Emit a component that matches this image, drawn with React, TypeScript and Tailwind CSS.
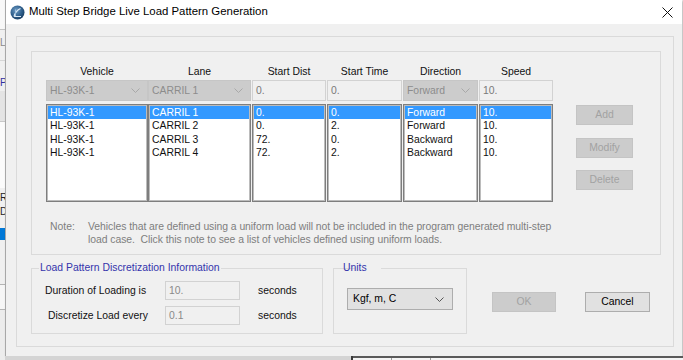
import React from 'react';

// column layout of the vehicle table (widths in px, measured from the dialog)
const columns = [
  { head: 'Vehicle', width: 'w-[102px]', kind: 'combo', value: 'HL-93K-1' },
  { head: 'Lane', width: 'w-[103px]', kind: 'combo', value: 'CARRIL 1' },
  { head: 'Start Dist', width: 'w-[75px]', kind: 'input', value: '0.' },
  { head: 'Start Time', width: 'w-[76px]', kind: 'input', value: '0.' },
  { head: 'Direction', width: 'w-[76px]', kind: 'combo', value: 'Forward' },
  { head: 'Speed', width: 'w-[75px]', kind: 'input', value: '10.' },
];

const rows = [
  ['HL-93K-1', 'CARRIL 1', '0.', '0.', 'Forward', '10.'],
  ['HL-93K-1', 'CARRIL 2', '0.', '2.', 'Forward', '10.'],
  ['HL-93K-1', 'CARRIL 3', '72.', '0.', 'Backward', '10.'],
  ['HL-93K-1', 'CARRIL 4', '72.', '2.', 'Backward', '10.'],
];

function Chevron({ color }: { color: string }) {
  return (
    <svg width="9" height="5" viewBox="0 0 9 5" className="shrink-0">
      <path d="M0.5 0.5 L4.5 4.5 L8.5 0.5" fill="none" stroke={color} strokeWidth="1" />
    </svg>
  );
}

function AppIcon() {
  return (
    <svg width="15" height="15" viewBox="0 0 15 15" className="shrink-0">
      <defs>
        <radialGradient id="g" cx="0.4" cy="0.35" r="0.7">
          <stop offset="0" stopColor="#6f9cc4" />
          <stop offset="0.6" stopColor="#2f5f8c" />
          <stop offset="1" stopColor="#173b5e" />
        </radialGradient>
      </defs>
      <circle cx="7.5" cy="7.5" r="7" fill="url(#g)" />
      <path d="M4 11.5 C5 8 7 5 10.5 3.5 M4 11.5 L11 11.5" stroke="#dbe8f3" strokeWidth="1.2" fill="none" />
      <path d="M5.5 4.5 L5.5 11" stroke="#9fc0dc" strokeWidth="1" fill="none" />
    </svg>
  );
}

function DisabledButton({ label }: { label: string }) {
  return (
    <div className="w-[57px] h-[20px] bg-[#cccccc] border border-[#c4c4c4] flex items-center justify-center text-[#a2a2a2]">
      {label}
    </div>
  );
}

export default function App() {
  return (
    <div className="w-[683px] h-[360px] overflow-hidden bg-[#f0f0f0] flex font-['Liberation_Sans',Arial,sans-serif] text-[10.4px] text-[#111]">
      {/* bit of the application window behind the dialog */}
      <div className="w-[5px] shrink-0 flex flex-col overflow-hidden text-[10px] leading-none">
        <div className="h-[29px] bg-[#f8f8f8]" />
        <div className="h-px bg-[#c4c4c4]" />
        <div className="h-[30px] bg-[#f0f0f0] text-[#8a8a8a] pt-[8px]">Lo</div>
        <div className="h-px bg-[#d6d6d6]" />
        <div className="h-[30px] bg-[#f0f0f0] text-[#2f2fa0] pt-[17px]">Pa</div>
        <div className="h-[30px] bg-[#e4e4e4]" />
        <div className="h-px bg-[#c8c8c8]" />
        <div className="h-[66px] bg-[#fbfbfb]" />
        <div className="h-[40px] bg-[#f0f0f0] text-[#222] pt-[3px] leading-[14px]">
          RA
          <br />
          D
        </div>
        <div className="h-[12px] bg-[#0078d7]" />
        <div className="h-[44px] bg-[#f0f0f0]" />
        <div className="h-px bg-[#b4b4b4]" />
        <div className="h-[24px] bg-[#f6f6f6]" />
        <div className="h-px bg-[#b4b4b4]" />
        <div className="flex-1 bg-[#ececec]" />
      </div>

      <div className="w-[678px] shrink-0 flex flex-col">
        {/* dialog window */}
        <div className="h-[356px] w-[677px] flex flex-col border-l border-[#a8a8a8] bg-[#f0f0f0] shadow-[1px_1px_2px_rgba(0,0,0,0.25)]">
          <div className="h-[24px] shrink-0 bg-white flex items-center pl-[4px] pr-[9px]">
            <AppIcon />
            <span className="ml-[4px] text-[11.4px] text-black">Multi Step Bridge Live Load Pattern Generation</span>
            <svg width="11" height="11" viewBox="0 0 11 11" className="ml-auto">
              <path d="M0.5 0.5 L10.5 10.5 M10.5 0.5 L0.5 10.5" stroke="#111" strokeWidth="1" />
            </svg>
          </div>

          <div className="flex-1 pt-[12px] pl-[10px] pr-[8px] pb-[9px]">
            <div className="h-full border border-[#dadada] pt-[14px] pl-[14px] pr-[12px]">
              {/* vehicle table group */}
              <div className="h-[204px] border border-[#dadada] pl-[14px] pt-[14px]">
                <div className="flex">
                  <div className="flex">
                    {columns.map((col, ci) => (
                      <div key={col.head} className={`${col.width} flex flex-col ${ci > 1 ? 'pl-px' : ''}`}>
                        <div className="h-[12px] leading-[12px] text-center mb-[2px] text-[#111]">{col.head}</div>
                        {col.kind === 'combo' ? (
                          <div className="h-[21px] bg-[#cccccc] border border-[#c6c6c6] flex items-center pl-[3px] pr-[7px] text-[#8c8c8c]">
                            <span className="flex-1">{col.value}</span>
                            <Chevron color="#a8a8a8" />
                          </div>
                        ) : (
                          <div className="h-[21px] bg-[#f0f0f0] border border-[#d2d2d2] flex items-center pl-[3px] text-[#7a7a7a]">
                            {col.value}
                          </div>
                        )}
                        <div className="mt-[3px] h-[98px] bg-white border border-[#7e7e7e] shadow-[inset_0_0_0_1px_#bcbcbc] p-px">
                          {rows.map((r, ri) => (
                            <div
                              key={ri}
                              className={`h-[13.4px] leading-[13.4px] px-[2px] whitespace-nowrap overflow-hidden ${
                                ri === 0 ? 'bg-[#3399ff] text-white' : 'text-[#111]'
                              }`}
                            >
                              {r[ci]}
                            </div>
                          ))}
                        </div>
                      </div>
                    ))}
                  </div>

                  <div className="ml-[23px] pt-[39px] flex flex-col">
                    <DisabledButton label="Add" />
                    <div className="mt-[13px]">
                      <DisabledButton label="Modify" />
                    </div>
                    <div className="mt-[12px]">
                      <DisabledButton label="Delete" />
                    </div>
                  </div>
                </div>

                <div className="mt-[19px] flex text-[#7e7e7e] leading-[12.6px]">
                  <div className="w-[42px] pl-[4px]">Note:</div>
                  <div className="whitespace-pre tracking-[-0.05px]">
                    {'Vehicles that are defined using a uniform load will not be included in the program generated multi-step\nload case.  Click this note to see a list of vehicles defined using uniform loads.'}
                  </div>
                </div>
              </div>

              {/* lower row: discretization, units, OK / Cancel */}
              <div className="flex items-start mt-[7px]">
                <fieldset className="w-[292px] h-[72px] border border-[#dadada] px-0 pt-[7px]">
                  <legend className="ml-[7px] px-px leading-[12px] text-[#3434ac]">Load Pattern Discretization Information</legend>
                  <div className="flex flex-col gap-[6px]">
                    <div className="flex items-center h-[19px]">
                      <div className="w-[133px] pl-[13px]">Duration of Loading is</div>
                      <div className="w-[75px] h-[19px] bg-[#f0f0f0] border border-[#d2d2d2] flex items-center pl-[3px] text-[#8a8a8a]">10.</div>
                      <div className="ml-[18px]">seconds</div>
                    </div>
                    <div className="flex items-center h-[19px]">
                      <div className="w-[133px] pl-[16px]">Discretize Load every</div>
                      <div className="w-[75px] h-[19px] bg-[#f0f0f0] border border-[#d2d2d2] flex items-center pl-[3px] text-[#8a8a8a]">0.1</div>
                      <div className="ml-[18px]">seconds</div>
                    </div>
                  </div>
                </fieldset>

                <fieldset className="ml-[10px] w-[134px] h-[72px] border border-[#dadada] px-0 pt-[14px] pl-[13px]">
                  <legend className="ml-[8px] -translate-x-[13px] px-px leading-[12px] text-[#3434ac]">Units</legend>
                  <div className="w-[106px] h-[22px] bg-[#e1e1e1] border border-[#adadad] flex items-center pl-[5px] pr-[8px] text-black">
                    <span className="flex-1">Kgf, m, C</span>
                    <Chevron color="#555" />
                  </div>
                </fieldset>

                <div className="ml-[25px] mt-[30px] w-[64px] h-[20px] bg-[#cccccc] border border-[#c4c4c4] flex items-center justify-center text-[#a2a2a2]">
                  OK
                </div>
                <div className="ml-[29px] mt-[30px] w-[65px] h-[20px] bg-[#e1e1e1] border border-[#adadad] flex items-center justify-center text-black">
                  Cancel
                </div>
              </div>
            </div>
          </div>
        </div>

        {/* strip of the window below the dialog */}
        <div className="flex-1 flex">
          <div className="w-[346px] bg-[#d4d4d4]" />
          <div className="w-[2px] bg-[#3a3a3a]" />
          <div className="flex-1 flex flex-col">
            <div className="h-[2px] bg-[#5a5a5a]" />
            <div className="flex-1 bg-[#f4f4f4] flex">
              <div className="w-[38px]" />
              <div className="w-px bg-[#9a9a9a]" />
              <div className="w-[38px]" />
              <div className="w-px bg-[#9a9a9a]" />
            </div>
          </div>
        </div>
      </div>
    </div>
  );
}
